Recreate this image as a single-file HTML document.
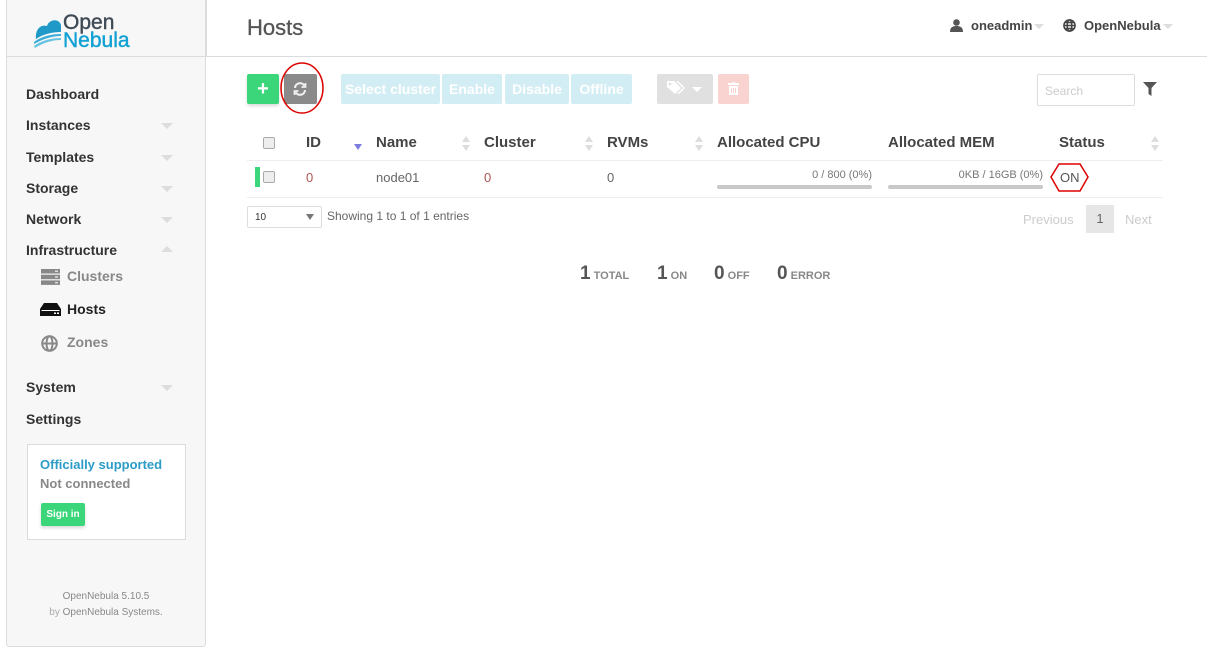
<!DOCTYPE html>
<html><head><meta charset="utf-8">
<style>
*{box-sizing:border-box;margin:0;padding:0}
body{width:1227px;height:661px;background:#fff;font-family:"Liberation Sans",sans-serif;color:#555;position:relative;overflow:hidden;font-size:14px}
.a{position:absolute}
#side{left:6px;top:-2px;width:200px;height:649px;background:#f7f7f7;border:1px solid #dcdcdc;border-radius:0 0 3px 3px}
.nav{left:26px;font-size:14px;font-weight:bold;color:#333}
.car{width:0;height:0;border-left:6px solid transparent;border-right:6px solid transparent;border-top:6px solid #ddd;left:161px}
.caru{width:0;height:0;border-left:6px solid transparent;border-right:6px solid transparent;border-bottom:6px solid #ddd;left:161px}
.sub{left:67px;font-size:14px;font-weight:bold;color:#888}
.btn{height:30px;border-radius:2px;color:#fff;font-weight:bold;font-size:14px;text-align:center;line-height:30px}
.th{top:134px;font-weight:bold;font-size:15px;color:#444}
.td{top:170px;font-size:13px;color:#666}
.cb{width:12px;height:12px;border:1px solid #aaa;border-radius:2px;background:#eee}
</style></head><body>
<div id="side" class="a"></div>
<div class="a" style="left:6px;top:56px;width:1201px;height:1px;background:#dcdcdc"></div>
<div class="a" style="left:206px;top:0;width:1px;height:57px;background:#dcdcdc"></div>
<svg class="a" style="left:33px;top:15px" width="30" height="34" viewBox="0 0 30 34">
<path d="M3 24 C2 14 8 9 14 11 C16 4 26 3 28 10 L28 17 C20 17 10 19 3 24Z" fill="#1f9ac8"/>
<path d="M1 27 C9 21 19 19 28 19 L28 21 C19 21 10 24 1 29Z" fill="#3aaed8"/>
<path d="M1 31 C9 25 19 23 28 23 L28 25 C19 25 10 28 2 33Z" fill="#6cc4e4"/>
</svg>
<div class="a" style="left:63px;top:13px;font-size:21px;color:#3f4a55;line-height:20px;-webkit-text-stroke:0.4px #3f4a55">Open</div>
<div class="a" style="left:63px;top:31px;font-size:21px;color:#0fa1d3;line-height:20px;-webkit-text-stroke:0.4px #0fa1d3">Nebula</div>
<div class="a" style="left:247px;top:15px;font-size:22px;color:#555;-webkit-text-stroke:0.3px #555">Hosts</div>
<svg class="a" style="left:950px;top:19px" width="13" height="13" viewBox="0 0 13 13"><circle cx="6.5" cy="3.5" r="3.3" fill="#555"/><path d="M0 13 C0 8 3 7 6.5 7 C10 7 13 8 13 13Z" fill="#555"/></svg>
<div class="a" style="left:971px;top:18px;font-size:13px;font-weight:bold;color:#444">oneadmin</div>
<div class="a car" style="left:1034px;top:24px;border-left-width:5px;border-right-width:5px;border-top-width:5px"></div>
<svg class="a" style="left:1063px;top:19px" width="13" height="13" viewBox="0 0 13 13" fill="none" stroke="#444" stroke-width="1.5"><circle cx="6.5" cy="6.5" r="5.6"/><ellipse cx="6.5" cy="6.5" rx="2.3" ry="5.6"/><path d="M1 6.5H12M2 3.5H11M2 9.5H11"/></svg>
<div class="a" style="left:1084px;top:18px;font-size:13px;font-weight:bold;color:#444">OpenNebula</div>
<div class="a car" style="left:1163px;top:24px;border-left-width:5px;border-right-width:5px;border-top-width:5px"></div>
<div class="a nav" style="top:86px">Dashboard</div>
<div class="a nav" style="top:117px">Instances</div><div class="a car" style="top:123px"></div>
<div class="a nav" style="top:149px">Templates</div><div class="a car" style="top:155px"></div>
<div class="a nav" style="top:180px">Storage</div><div class="a car" style="top:186px"></div>
<div class="a nav" style="top:211px">Network</div><div class="a car" style="top:217px"></div>
<div class="a nav" style="top:242px">Infrastructure</div><div class="a caru" style="top:246px"></div>
<svg class="a" style="left:41px;top:269px" width="19" height="16" viewBox="0 0 19 16"><rect y="0" width="19" height="4.5" fill="#888"/><rect y="5.7" width="19" height="4.5" fill="#888"/><rect y="11.4" width="19" height="4.5" fill="#888"/><rect x="14" y="1.5" width="3" height="1.5" fill="#ddd"/><rect x="14" y="7.2" width="3" height="1.5" fill="#ddd"/><rect x="14" y="12.9" width="3" height="1.5" fill="#ddd"/></svg>
<div class="a sub" style="top:268px">Clusters</div>
<svg class="a" style="left:40px;top:303px" width="21" height="13" viewBox="0 0 21 13"><path d="M4 0H17L21 6V13H0V6Z" fill="#111"/><rect x="1.5" y="7" width="18" height="1" fill="#fff"/><rect x="14" y="9.5" width="2" height="1.5" fill="#fff"/><rect x="17" y="9.5" width="2" height="1.5" fill="#fff"/></svg>
<div class="a sub" style="top:301px;color:#222">Hosts</div>
<svg class="a" style="left:41px;top:335px" width="17" height="17" viewBox="0 0 17 17" fill="none" stroke="#888" stroke-width="2"><circle cx="8.5" cy="8.5" r="7.3"/><ellipse cx="8.5" cy="8.5" rx="3" ry="7.3"/><path d="M1 8.5H16"/></svg>
<div class="a sub" style="top:334px">Zones</div>
<div class="a nav" style="top:379px">System</div><div class="a car" style="top:385px"></div>
<div class="a nav" style="top:411px">Settings</div>
<div class="a" style="left:27px;top:444px;width:159px;height:96px;background:#fff;border:1px solid #dcdcdc"></div>
<div class="a" style="left:40px;top:457px;font-size:13px;font-weight:bold;color:#2b9cc6">Officially supported</div>
<div class="a" style="left:40px;top:476px;font-size:13px;font-weight:bold;color:#888">Not connected</div>
<div class="a btn" style="left:41px;top:503px;width:44px;height:23px;line-height:23px;font-size:10px;background:#3bd67a;box-shadow:0 2px 3px rgba(0,0,0,.15)">Sign in</div>
<div class="a" style="left:6px;top:591px;width:200px;text-align:center;font-size:10px;color:#888">OpenNebula 5.10.5</div>
<div class="a" style="left:6px;top:607px;width:200px;text-align:center;font-size:10px;color:#aaa">by <span style="color:#888">OpenNebula Systems.</span></div>
<div class="a btn" style="left:247px;top:74px;width:32px;background:#3bd67a;font-size:20px;box-shadow:0 2px 3px rgba(0,0,0,.15)">+</div>
<div class="a btn" style="left:284px;top:74px;width:33px;background:#8a8a8a"></div>
<svg class="a" style="left:293px;top:82px" width="14" height="14" viewBox="0 0 14 14" fill="none" stroke="#eee" stroke-width="2.2"><path d="M2 6 A5 5 0 0 1 11.5 4"/><path d="M12 8 A5 5 0 0 1 2.5 10"/><path d="M12.5 1 V5 H8.5" stroke-width="1.8"/><path d="M1.5 13 V9 H5.5" stroke-width="1.8"/></svg>
<svg class="a" style="left:280px;top:61px" width="45" height="55"><ellipse cx="22" cy="27" rx="21" ry="25" fill="none" stroke="#d00" stroke-width="1.5"/></svg>
<div class="a btn" style="left:341px;top:74px;width:99px;background:#d3edf4">Select cluster</div>
<div class="a btn" style="left:442px;top:74px;width:60px;background:#d3edf4">Enable</div>
<div class="a btn" style="left:505px;top:74px;width:64px;background:#d3edf4">Disable</div>
<div class="a btn" style="left:571px;top:74px;width:61px;background:#d3edf4">Offline</div>
<div class="a btn" style="left:657px;top:74px;width:56px;background:#e0e0e0"></div>
<svg class="a" style="left:667px;top:81px" width="18" height="14" viewBox="0 0 18 14"><path d="M0 0H7L14 7L8 13L0 6Z" fill="#fff"/><circle cx="3" cy="3" r="1.3" fill="#e0e0e0"/><path d="M10 0L17 7L11 13" fill="none" stroke="#fff" stroke-width="1.5"/></svg>
<div class="a" style="left:692px;top:87px;border-left:5px solid transparent;border-right:5px solid transparent;border-top:5px solid #fff"></div>
<div class="a btn" style="left:718px;top:74px;width:31px;background:#f8d3cf"></div>
<svg class="a" style="left:728px;top:82px" width="11" height="13" viewBox="0 0 11 13"><rect x="0" y="1" width="11" height="2" fill="#fff"/><rect x="4" y="0" width="3" height="2" fill="#fff"/><path d="M1 4H10V13H1Z" fill="#fff"/><path d="M3.5 6V11M5.5 6V11M7.5 6V11" stroke="#f8d3cf" stroke-width="1"/></svg>
<div class="a" style="left:1037px;top:74px;width:98px;height:32px;border:1px solid #ddd;border-radius:2px;font-size:12px;color:#ccc;padding:9px 7px">Search</div>
<svg class="a" style="left:1143px;top:82px" width="14" height="14" viewBox="0 0 14 14"><path d="M0 0H14L8.5 6V14L5.5 12V6Z" fill="#555"/></svg>
<div class="a cb" style="left:263px;top:137px"></div>
<div class="a th" style="left:306px">ID</div>
<div class="a" style="left:354px;top:144px;border-left:4px solid transparent;border-right:4px solid transparent;border-top:6px solid #7b7be0"></div>
<div class="a th" style="left:376px">Name</div>
<div class="a th" style="left:484px">Cluster</div>
<div class="a th" style="left:607px">RVMs</div>
<div class="a th" style="left:717px">Allocated CPU</div>
<div class="a th" style="left:888px">Allocated MEM</div>
<div class="a th" style="left:1059px">Status</div>
<svg class="a" style="left:461px;top:136px" width="10" height="16"><path d="M1 6L5 0L9 6ZM1 9H9L5 15Z" fill="#ddd"/></svg>
<svg class="a" style="left:584px;top:136px" width="10" height="16"><path d="M1 6L5 0L9 6ZM1 9H9L5 15Z" fill="#ddd"/></svg>
<svg class="a" style="left:694px;top:136px" width="10" height="16"><path d="M1 6L5 0L9 6ZM1 9H9L5 15Z" fill="#ddd"/></svg>
<svg class="a" style="left:1150px;top:136px" width="10" height="16"><path d="M1 6L5 0L9 6ZM1 9H9L5 15Z" fill="#ddd"/></svg>
<div class="a" style="left:247px;top:160px;width:916px;height:1px;background:#eee"></div>
<div class="a" style="left:255px;top:167px;width:5px;height:20px;background:#3bd67a"></div>
<div class="a cb" style="left:263px;top:171px"></div>
<div class="a td" style="left:306px;color:#a55">0</div>
<div class="a td" style="left:376px">node01</div>
<div class="a td" style="left:484px;color:#a55">0</div>
<div class="a td" style="left:607px">0</div>
<div class="a" style="left:717px;top:169px;width:155px;text-align:right;font-size:11px;color:#777">0 / 800 (0%)</div>
<div class="a" style="left:717px;top:185px;width:155px;height:4px;background:#c8c8c8;border-radius:2px"></div>
<div class="a" style="left:888px;top:169px;width:155px;text-align:right;font-size:11px;color:#777">0KB / 16GB (0%)</div>
<div class="a" style="left:888px;top:185px;width:155px;height:4px;background:#c8c8c8;border-radius:2px"></div>
<div class="a td" style="left:1060px;color:#555">ON</div>
<svg class="a" style="left:1049px;top:162px" width="42" height="31"><polygon points="10,2 31,2 39,15 31,29 10,29 2,15" fill="none" stroke="#d00" stroke-width="1.5"/></svg>
<div class="a" style="left:247px;top:197px;width:916px;height:1px;background:#eee"></div>
<div class="a" style="left:247px;top:206px;width:75px;height:22px;border:1px solid #ddd;border-radius:2px;font-size:10px;color:#333;padding:5px 7px">10</div>
<div class="a" style="left:306px;top:214px;border-left:4px solid transparent;border-right:4px solid transparent;border-top:6px solid #777"></div>
<div class="a" style="left:327px;top:209px;font-size:12px;color:#666">Showing 1 to 1 of 1 entries</div>
<div class="a" style="left:1023px;top:212px;font-size:13px;color:#ccc">Previous</div>
<div class="a" style="left:1086px;top:205px;width:28px;height:28px;background:#e6e6e6;font-size:13px;color:#666;text-align:center;line-height:28px">1</div>
<div class="a" style="left:1125px;top:212px;font-size:13px;color:#ccc">Next</div>
<div class="a" style="left:580px;top:263px;font-size:19px;font-weight:bold;color:#555;white-space:nowrap">1<span style="font-size:11px;color:#888"> TOTAL</span></div>
<div class="a" style="left:657px;top:263px;font-size:19px;font-weight:bold;color:#555;white-space:nowrap">1<span style="font-size:11px;color:#888"> ON</span></div>
<div class="a" style="left:714px;top:263px;font-size:19px;font-weight:bold;color:#555;white-space:nowrap">0<span style="font-size:11px;color:#888"> OFF</span></div>
<div class="a" style="left:777px;top:263px;font-size:19px;font-weight:bold;color:#555;white-space:nowrap">0<span style="font-size:11px;color:#888"> ERROR</span></div>
</body></html>
